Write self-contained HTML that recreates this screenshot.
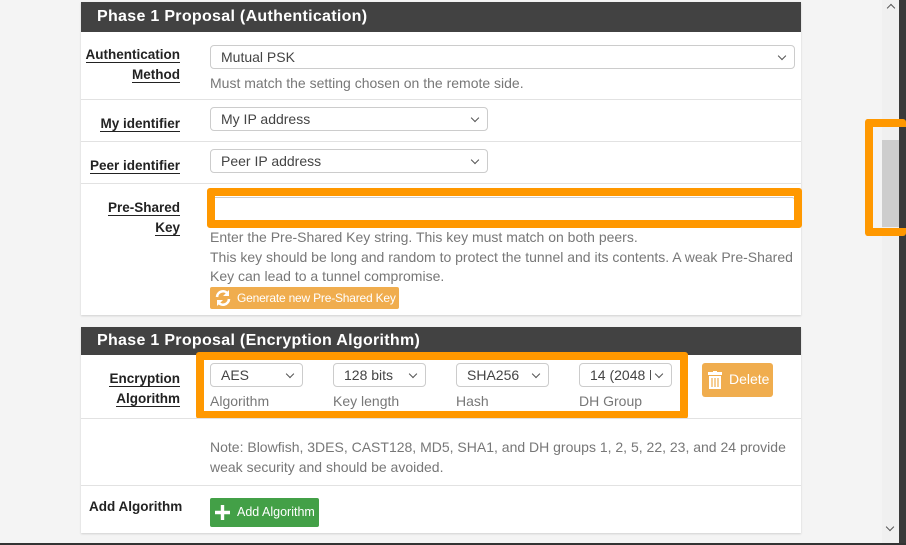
<!DOCTYPE html>
<html><head><style>
*{margin:0;padding:0;box-sizing:border-box}
body{width:906px;height:545px;background:#f4f4f4;font-family:"Liberation Sans",sans-serif;position:relative;overflow:hidden;font-size:14px;color:#333}
.a{position:absolute}
.panel{background:#fff;left:81px;width:720px;box-shadow:0 1px 2px rgba(0,0,0,.15)}
.hd{background:#424242;color:#fff;font-weight:bold;font-size:16px;left:81px;width:720px;padding-left:16px;letter-spacing:.3px}
.lbl{font-weight:bold;font-size:13.5px;text-align:right;right:726px;line-height:20px;color:#222}
.lbl u{text-decoration:none;border-bottom:1px solid #222}
.sel{border:1px solid #ccc;border-radius:4px;background:#fff;height:24px;font-size:14px;padding:3px 10px;color:#444}
.sel:after{content:"";position:absolute;right:9px;top:7px;width:5px;height:5px;border-right:1.5px solid #555;border-bottom:1.5px solid #555;transform:rotate(45deg)}
.help{color:#777;font-size:14px;line-height:19.5px}
.line{height:1px;background:#e2e2e2;left:81px;width:720px}
.ob{border:8px solid #ff9800;border-radius:3px}
</style></head><body>
<div class="a panel" style="top:2px;height:313px"></div>
<div class="a hd" style="top:2px;height:30px;line-height:30px">Phase 1 Proposal (Authentication)</div>
<div class="a lbl" style="top:45px"><u>Authentication</u><br><u>Method</u></div>
<div class="a sel" style="left:210px;top:45px;width:585px">Mutual PSK</div>
<div class="a help" style="left:210px;top:74px">Must match the setting chosen on the remote side.</div>
<div class="a line" style="top:99px"></div>
<div class="a lbl" style="top:114px"><u>My identifier</u></div>
<div class="a sel" style="left:210px;top:107px;width:278px">My IP address</div>
<div class="a line" style="top:141px"></div>
<div class="a lbl" style="top:156px"><u>Peer identifier</u></div>
<div class="a sel" style="left:210px;top:149px;width:278px">Peer IP address</div>
<div class="a line" style="top:183px"></div>
<div class="a lbl" style="top:198px"><u>Pre-Shared</u><br><u>Key</u></div>
<div class="a" style="left:210px;top:197px;width:585px;height:25px;border:1px solid #ccc;border-radius:3px;background:#fff"></div>
<div class="a ob" style="left:207px;top:188px;width:595px;height:40px"></div>
<div class="a help" style="left:210px;top:228px;width:585px">Enter the Pre-Shared Key string. This key must match on both peers.<br>This key should be long and random to protect the tunnel and its contents. A weak Pre-Shared<br>Key can lead to a tunnel compromise.</div>
<div class="a" style="left:210px;top:287px;width:189px;height:22px;background:#f0ad4e;border-radius:2px;color:#fff;font-size:12px;line-height:22px;padding-left:27px;white-space:nowrap;letter-spacing:-.2px">Generate new Pre-Shared Key
<svg class="a" style="left:4px;top:2px" width="18" height="18" viewBox="0 0 18 18"><path d="M3 8a6 6 0 0 1 11-3M15 10a6 6 0 0 1-11 3" stroke="#fff" stroke-width="2.6" fill="none"/><path d="M15 1v6h-6z M3 17v-6h6z" fill="#fff"/></svg></div>

<div class="a panel" style="top:327px;height:206px"></div>
<div class="a hd" style="top:327px;height:28px;line-height:28px">Phase 1 Proposal (Encryption Algorithm)</div>
<div class="a lbl" style="top:369px"><u>Encryption</u><br><u>Algorithm</u></div>
<div class="a sel" style="left:210px;top:363px;width:93px">AES</div>
<div class="a sel" style="left:333px;top:363px;width:93px">128 bits</div>
<div class="a sel" style="left:456px;top:363px;width:93px">SHA256</div>
<div class="a sel" style="left:579px;top:363px;width:93px;white-space:nowrap"><div style="overflow:hidden;width:61px">14 (2048 bit</div></div>
<div class="a help" style="left:210px;top:392px">Algorithm</div>
<div class="a help" style="left:333px;top:392px">Key length</div>
<div class="a help" style="left:456px;top:392px">Hash</div>
<div class="a help" style="left:579px;top:392px">DH Group</div>
<div class="a ob" style="left:196px;top:352px;width:492px;height:67px"></div>
<div class="a" style="left:702px;top:363px;width:71px;height:34px;background:#f0ad4e;border-radius:3px;color:#fff;font-size:14px;line-height:33px;padding-left:27px">Delete
<svg class="a" style="left:5px;top:8px" width="16" height="19" viewBox="0 0 16 19"><rect x="1" y="1" width="14" height="3" fill="#fff"/><rect x="6" y="0" width="4" height="2" fill="#fff"/><path d="M2 5h12v13H2z" fill="#fff"/><path d="M5 7v9M8 7v9M11 7v9" stroke="#f0ad4e" stroke-width="1.2"/></svg></div>
<div class="a line" style="top:418px"></div>
<div class="a help" style="left:210px;top:438px;width:590px">Note: Blowfish, 3DES, CAST128, MD5, SHA1, and DH groups 1, 2, 5, 22, 23, and 24 provide<br>weak security and should be avoided.</div>
<div class="a line" style="top:485px"></div>
<div class="a" style="left:89px;top:499px;font-weight:bold;font-size:13.5px;color:#222">Add Algorithm</div>
<div class="a" style="left:210px;top:498px;width:109px;height:29px;background:#43a047;border-radius:2px;color:#fff;font-size:12.5px;line-height:29px;padding-left:27px">Add Algorithm
<svg class="a" style="left:5px;top:7px" width="15" height="15"><path d="M7.5 0v15M0 7.5h15" stroke="#fff" stroke-width="3.4"/></svg></div>

<div class="a" style="left:882px;top:0;width:17px;height:545px;background:#f0f0f0"></div>
<div class="a" style="left:882px;top:140px;width:17px;height:87px;background:#cdcdcd"></div>
<div class="a" style="left:899px;top:0;width:7px;height:545px;background:#3a3a3a"></div>
<div class="a" style="left:888px;top:5px;width:6px;height:6px;border-left:1.5px solid #555;border-top:1.5px solid #555;transform:rotate(45deg)"></div>
<div class="a" style="left:887px;top:524px;width:6px;height:6px;border-right:1.5px solid #555;border-bottom:1.5px solid #555;transform:rotate(45deg)"></div>
<div class="a ob" style="left:865px;top:119px;width:41px;height:117px;border-width:8px 0 8px 8px;border-right:0"></div>
<div class="a" style="left:0;top:543px;width:906px;height:2px;background:#333"></div>
</body></html>
